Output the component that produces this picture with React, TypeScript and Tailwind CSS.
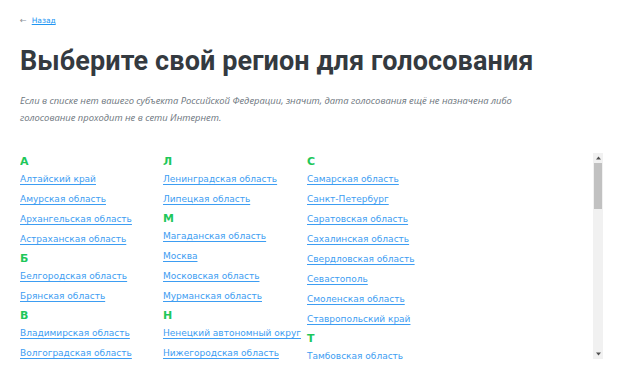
import React from "react";

type Group = { letter: string; items: string[] };

const columns: Group[][] = [
  [
    { letter: "А", items: ["Алтайский край", "Амурская область", "Архангельская область", "Астраханская область"] },
    { letter: "Б", items: ["Белгородская область", "Брянская область"] },
    { letter: "В", items: ["Владимирская область", "Волгоградская область"] },
  ],
  [
    { letter: "Л", items: ["Ленинградская область", "Липецкая область"] },
    { letter: "М", items: ["Магаданская область", "Москва", "Московская область", "Мурманская область"] },
    { letter: "Н", items: ["Ненецкий автономный округ", "Нижегородская область"] },
  ],
  [
    {
      letter: "С",
      items: [
        "Самарская область",
        "Санкт-Петербург",
        "Саратовская область",
        "Сахалинская область",
        "Свердловская область",
        "Севастополь",
        "Смоленская область",
        "Ставропольский край",
      ],
    },
    { letter: "Т", items: ["Тамбовская область"] },
  ],
];

function Arrow({ up }: { up: boolean }) {
  return (
    <div className="h-[10px] flex items-center justify-center bg-[#f1f1f1]">
      <svg width="5" height="4" viewBox="0 0 5 4">
        {up ? <polygon points="2.5,0.5 5,3.5 0,3.5" fill="#505050" /> : <polygon points="0,0.5 5,0.5 2.5,3.5" fill="#505050" />}
      </svg>
    </div>
  );
}

export default function App() {
  return (
    <div className="w-[628px] h-[373px] overflow-hidden bg-white">
      <div className="pl-[20px] pt-[15px]">
        <div className="flex items-center gap-[5px] h-[12px] text-[7.5px] font-['DejaVu_Sans',sans-serif]">
          <span className="text-[#8a8f95] text-[8px] leading-none">←</span>
          <a href="#" className="text-[#2196f3] underline leading-none">Назад</a>
        </div>
        <h1 className="mt-[17px] text-[27px] leading-[34px] font-bold text-[#343a40] font-['Roboto',sans-serif] tracking-[0.1px]">
          Выберите свой регион для голосования
        </h1>
        <p className="mt-[14px] w-[540px] text-[9.4px] leading-[17px] italic text-[#6c757d] font-['Open_Sans',sans-serif]">
          Если в списке нет вашего субъекта Российской Федерации, значит, дата голосования ещё не назначена либо голосование проходит не в сети Интернет.
        </p>
      </div>
      <div className="ml-[20px] mt-[27px] w-[583px] h-[206px] flex">
        <div className="flex-1 overflow-hidden">
          <div className="grid grid-cols-[143px_144px_143px] pt-[1px] font-['DejaVu_Sans',sans-serif]">
            {columns.map((col, ci) => (
              <div key={ci} className="flex flex-col">
                {col.map((g) => (
                  <div key={g.letter} className="flex flex-col">
                    <div className="h-[17px] flex items-center text-[11px] font-bold text-[#1ec75a]">{g.letter}</div>
                    {g.items.map((it) => (
                      <a
                        key={it}
                        href="#"
                        className="h-[20px] flex items-start pt-[2px] text-[9px] text-[#3d9df2] underline underline-offset-2 whitespace-nowrap"
                      >
                        {it}
                      </a>
                    ))}
                  </div>
                ))}
              </div>
            ))}
          </div>
        </div>
        <div className="w-[10px] flex flex-col bg-[#f1f1f1]">
          <Arrow up />
          <div className="flex-1 px-[1px]">
            <div className="h-[46px] bg-[#c1c1c1]" />
          </div>
          <Arrow up={false} />
        </div>
      </div>
    </div>
  );
}
